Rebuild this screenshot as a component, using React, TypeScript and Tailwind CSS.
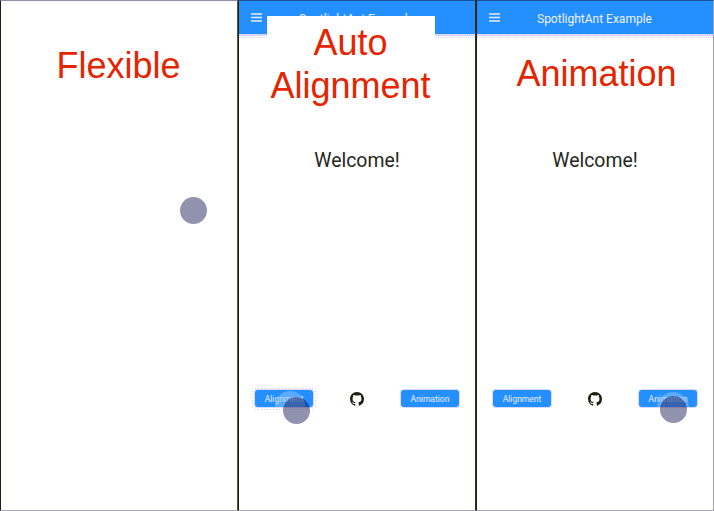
import type { ReactNode } from "react";

function MenuIcon() {
  return (
    <svg className="h-[9px] w-[11px]" viewBox="0 0 11 9" fill="none" stroke="#e4edff" strokeWidth="1.4">
      <path d="M0 1H11M0 4.5H11M0 8H11" />
    </svg>
  );
}

function GitHubIcon() {
  return (
    <svg className="h-[14px] w-[14px]" viewBox="0 0 16 16" fill="#20200f">
      <path d="M8 0C3.58 0 0 3.58 0 8c0 3.54 2.29 6.53 5.47 7.59.4.07.55-.17.55-.38 0-.19-.01-.82-.01-1.49-2.01.37-2.53-.49-2.69-.94-.09-.23-.48-.94-.82-1.13-.28-.15-.68-.52-.01-.53.63-.01 1.08.58 1.23.82.72 1.21 1.87.87 2.33.66.07-.52.28-.87.51-1.07-1.78-.2-3.64-.89-3.64-3.95 0-.87.31-1.59.82-2.15-.08-.2-.36-1.02.08-2.12 0 0 .67-.21 2.2.82a7.6 7.6 0 0 1 4 0c1.53-1.04 2.2-.82 2.2-.82.44 1.1.16 1.92.08 2.12.51.56.82 1.27.82 2.15 0 3.07-1.87 3.75-3.65 3.95.29.25.54.73.54 1.48 0 1.07-.01 1.93-.01 2.2 0 .21.15.46.55.38A8 8 0 0 0 16 8c0-4.42-3.58-8-8-8Z" />
    </svg>
  );
}

const label = "text-[8.5px] leading-none text-[#e8f0ff]";
const buttonBox =
  "flex h-[17px] w-[58px] items-center justify-center rounded-[3px] bg-[#248fff] pt-[2px] shadow-[0_0_0_1px_#dcd9ff]";
const touch = "h-[27px] w-[27px] rounded-full bg-[#0a0d49]/45";
const captionText =
  "text-center font-['Liberation_Sans',Arial,sans-serif] text-[36px] whitespace-nowrap text-[#e52400]";

function Header() {
  return (
    <header className="flex h-[35px] shrink-0 items-center gap-[37px] border-b-2 border-[#d6d6ff] bg-[#248fff] pl-3">
      <MenuIcon />
      <h1 className="pt-[2px] text-[12px] leading-none whitespace-nowrap text-[#edf3ff]">SpotlightAnt Example</h1>
    </header>
  );
}

function HeaderShade() {
  return <div className="h-[2px] shrink-0 border-b border-dotted border-[#d0d8ff]" />;
}

function Welcome() {
  return <p className="h-5 text-center text-[19.4px] leading-5 text-[#26261c]">Welcome!</p>;
}

function Phone({ children }: { children: ReactNode }) {
  return (
    <section className="flex min-w-0 flex-col border border-t-[#194f96] border-r-[#34331c] border-b-[#aaa8b9] border-l-[#202010] bg-white first:border-t-[#918fad] first:border-r-[#55543a] last:border-r-[#a3a1a5]">
      {children}
    </section>
  );
}

function Actions({ children }: { children: ReactNode }) {
  return <div className="mt-auto mb-[103px] flex items-center justify-between px-4">{children}</div>;
}

export default function App() {
  return (
    <main className="grid h-[511px] w-[714px] grid-cols-3 overflow-hidden bg-white font-[Roboto,sans-serif]">
      <Phone>
        <h2 className={`${captionText} mt-11 pr-px leading-[41px]`}>Flexible</h2>
        <div className={`${touch} mt-[111px] mr-[30px] self-end`} />
      </Phone>

      <Phone>
        <div className="relative">
          <Header />
          <HeaderShade />
          <h2 className={`${captionText} absolute top-[15px] left-7 h-[88px] w-[168px] bg-white pt-[5px] leading-[43px]`}>
            <span className="block pr-px">Auto</span>
            <span className="block pr-px">Alignment</span>
          </h2>
        </div>
        <div className="mt-[113px]">
          <Welcome />
        </div>
        <Actions>
          <button className={`${buttonBox} relative`}>
            <span className="absolute -inset-x-1 -inset-y-[3px] rounded-[5px] bg-[radial-gradient(#cfcaf8_0.8px,transparent_1px)] bg-size-[3px_3px]" />
            <span className="absolute inset-0 flex items-center justify-center overflow-hidden rounded-[3px] bg-[#248fff] pt-[2px] shadow-[0_0_0_1px_#dcd9ff]">
              <span className={label}>Alignment</span>
              <span className="absolute top-px left-5 h-[30px] w-[30px] rounded-full bg-[#8fc5ff]/50" />
            </span>
            <span className={`${touch} absolute top-[7px] left-[28px]`} />
          </button>
          <GitHubIcon />
          <button className={buttonBox}>
            <span className={label}>Animation</span>
          </button>
        </Actions>
      </Phone>

      <Phone>
        <Header />
        <HeaderShade />
        <h2 className={`${captionText} mt-[15px] pl-[3px] leading-[41px]`}>Animation</h2>
        <div className="mt-[57px]">
          <Welcome />
        </div>
        <Actions>
          <button className={buttonBox}>
            <span className={label}>Alignment</span>
          </button>
          <GitHubIcon />
          <button className={`${buttonBox} relative`}>
            <span className={label}>Animation</span>
            <span className="absolute inset-0 overflow-hidden">
              <span className="absolute top-[2px] left-[18px] h-8 w-8 rounded-full bg-[#8fc5ff]/50" />
            </span>
            <span className={`${touch} absolute top-[6px] left-[21px]`} />
          </button>
        </Actions>
      </Phone>
    </main>
  );
}
